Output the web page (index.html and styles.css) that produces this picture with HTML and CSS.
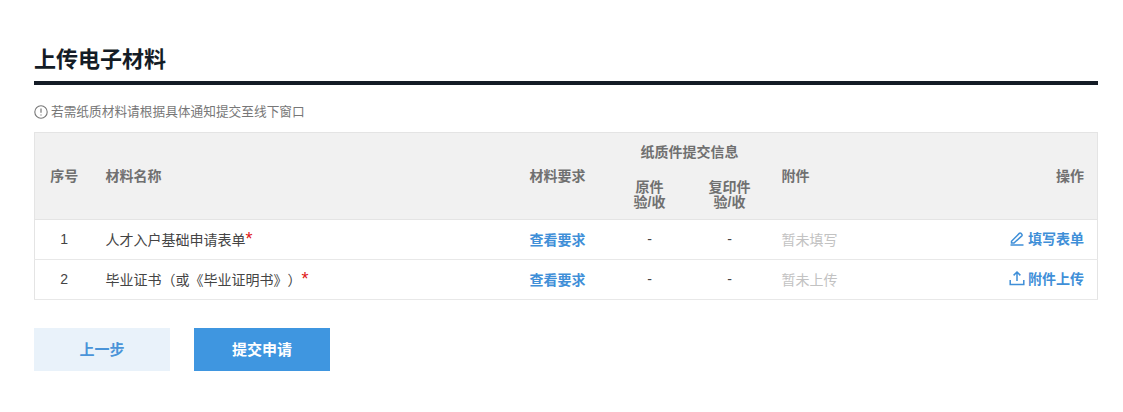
FILE: index.html
```html
<!DOCTYPE html>
<html lang="zh-CN">
<head>
    <meta charset="UTF-8">
    <meta name="viewport" content="width=device-width, initial-scale=1.0">
    <title>上传电子材料</title>
    <link rel="stylesheet" href="styles.css">
</head>
<body>
    <div class="page">
        <h2 class="title">上传电子材料</h2>

        <p class="tip">
            <svg class="tip-icon" viewBox="0 0 14 14" width="14" height="14">
                <circle cx="7" cy="7" r="6.2" fill="none" stroke="currentColor" stroke-width="1.1"/>
                <path d="M7 3.4v4.4M7 9.4v1.2" fill="none" stroke="currentColor" stroke-width="1.2"/>
            </svg>
            若需纸质材料请根据具体通知提交至线下窗口
        </p>

        <table class="material-table">
            <colgroup>
                <col class="col-no">
                <col class="col-name">
                <col class="col-req">
                <col class="col-paper">
                <col class="col-paper">
                <col class="col-file">
                <col>
            </colgroup>
            <thead>
                <tr>
                    <th rowspan="2" class="center">序号</th>
                    <th rowspan="2">材料名称</th>
                    <th rowspan="2">材料要求</th>
                    <th colspan="2" class="center group-head">纸质件提交信息</th>
                    <th rowspan="2">附件</th>
                    <th rowspan="2" class="right">操作</th>
                </tr>
                <tr>
                    <th class="center sub-head">原件<br>验/收</th>
                    <th class="center sub-head">复印件<br>验/收</th>
                </tr>
            </thead>
            <tbody>
                <tr>
                    <td class="center">1</td>
                    <td>人才入户基础申请表单<span class="required">*</span></td>
                    <td><a class="link" href="#">查看要求</a></td>
                    <td class="center">-</td>
                    <td class="center">-</td>
                    <td class="muted">暂未填写</td>
                    <td class="right">
                        <a class="link action" href="#">
                            <svg viewBox="0 0 16 16" width="16" height="16">
                                <path d="M2.5 11.2 10.3 3.4a1.2 1.2 0 0 1 1.7 0l.8.8a1.2 1.2 0 0 1 0 1.7L5 13H2.5zM1.5 14.9h13" fill="none" stroke="currentColor" stroke-width="1.5"/>
                            </svg>
                            填写表单
                        </a>
                    </td>
                </tr>
                <tr>
                    <td class="center">2</td>
                    <td>毕业证书（或《毕业证明书》）<span class="required">*</span></td>
                    <td><a class="link" href="#">查看要求</a></td>
                    <td class="center">-</td>
                    <td class="center">-</td>
                    <td class="muted">暂未上传</td>
                    <td class="right">
                        <a class="link action" href="#">
                            <svg viewBox="0 0 16 16" width="16" height="16">
                                <path d="M8 11V2.2M4.6 5.4 8 2l3.4 3.4M1.2 10v4.4h13.6V10" fill="none" stroke="currentColor" stroke-width="1.5"/>
                            </svg>
                            附件上传
                        </a>
                    </td>
                </tr>
            </tbody>
        </table>

        <div class="buttons">
            <button class="btn btn-light">上一步</button>
            <button class="btn btn-primary">提交申请</button>
        </div>
    </div>
</body>
</html>
```

FILE: styles.css
```css
* {
    margin: 0;
    padding: 0;
    box-sizing: border-box;
}

body {
    font-family: "Liberation Sans", "Noto Sans CJK SC", sans-serif;
    font-size: 14px;
    color: #444;
    background: white;
    text-spacing-trim: space-all;
}

.page {
    padding: 44px 25px 0 34px;
}

.title {
    font-size: 22px;
    line-height: 32px;
    font-weight: bold;
    color: #141c26;
    padding-bottom: 5px;
    border-bottom: 4px solid #141c26;
}

.tip {
    display: flex;
    align-items: center;
    gap: 3px;
    margin-top: 17px;
    font-size: 12.7px;
    line-height: 20px;
    color: #777;
}

.material-table {
    width: 100%;
    margin-top: 10px;
    border-collapse: collapse;
    table-layout: fixed;
    border: 1px solid #e4e4e4;
}

.col-no {
    width: 59px;
}

.col-name {
    width: 424px;
}

.col-req {
    width: 92px;
}

.col-paper {
    width: 80px;
}

.col-file {
    width: 130px;
}

th {
    background: #f1f1f1;
    color: #707070;
    font-weight: bold;
    text-align: left;
    padding: 0 12px 2px;
}

.group-head {
    height: 39px;
}

.sub-head {
    height: 48px;
    line-height: 15px;
    padding: 0;
}

thead tr:last-child th {
    border-bottom: 1px solid #e4e4e4;
}

thead tr:first-child th[rowspan] {
    border-bottom: 1px solid #e4e4e4;
}

td {
    height: 40px;
    padding: 0 12px 2px;
    border-bottom: 1px solid #e8e8e8;
}

.center {
    text-align: center;
}

.right {
    text-align: right;
    padding-right: 13px;
}

.muted {
    color: #c2c2c2;
}

.link {
    color: #3f8fd8;
    font-weight: bold;
    text-decoration: none;
}

.action {
    display: inline-flex;
    align-items: center;
    gap: 3px;
}

.required {
    color: #e01515;
    font-size: 18px;
    line-height: 1;
}

.buttons {
    display: flex;
    gap: 24px;
    margin-top: 28px;
}

.btn {
    width: 136px;
    height: 43px;
    border: none;
    font-family: inherit;
    font-size: 15px;
    font-weight: bold;
    padding-bottom: 2px;
    cursor: pointer;
}

.btn-light {
    background: #e9f2fa;
    color: #4a94d8;
}

.btn-primary {
    background: #3f96e0;
    color: white;
}
```
